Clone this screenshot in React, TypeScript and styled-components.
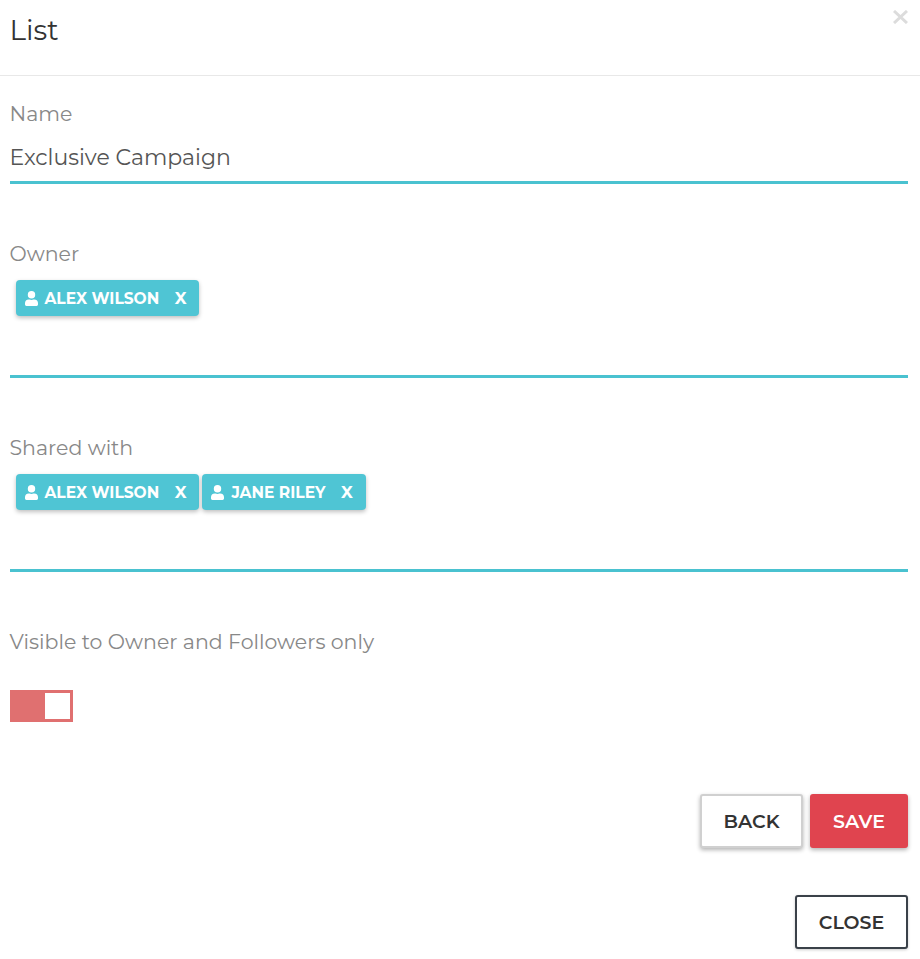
import React from "react";
import styled, { createGlobalStyle } from "styled-components";

const GlobalStyle = createGlobalStyle`
  html, body {
    margin: 0;
    padding: 0;
    background: #fff;
  }
  * {
    box-sizing: border-box;
  }
`;

const Page = styled.div`
  width: 920px;
  height: 959px;
  overflow: hidden;
  font-family: "Montserrat", "Inter", "Noto Sans", sans-serif;
  background: #fff;
  position: relative;
`;

const Header = styled.div`
  height: 76px;
  padding: 14px 10px 0 9.5px;
  border-bottom: 1px solid #e8e8e8;
`;

const Title = styled.h4`
  margin: 0;
  font-size: 28px;
  line-height: 32px;
  font-weight: 400;
  color: #333;
`;

const CloseIcon = styled.svg`
  position: absolute;
  top: 10px;
  right: 12px;
  width: 15px;
  height: 14px;
  stroke: #dcdcdc;
  stroke-width: 3;
`;

const Body = styled.div`
  padding: 0 12px 0 9.5px;
`;

const Label = styled.div`
  font-size: 20.5px;
  line-height: 25px;
  color: #888;
`;

const NameField = styled.div`
  margin-top: 25px;
`;

const NameValue = styled.div`
  margin-top: 12px;
  height: 46px;
  font-size: 22px;
  line-height: 40px;
  color: #555;
  border-bottom: 3px solid #4ac2d0;
`;

const TagField = styled.div`
  margin-top: 57px;
`;

const TagBox = styled.div`
  display: flex;
  gap: 3px;
  height: 109px;
  margin-top: 3px;
  padding: 11px 6px 0;
  border-bottom: 3px solid #4ac2d0;
  align-items: flex-start;
`;

const Tag = styled.div`
  display: flex;
  align-items: center;
  height: 36px;
  padding: 0 13px 0 9px;
  background: #4fc5d4;
  border-radius: 4px;
  box-shadow: 0 2px 4px rgba(0, 0, 0, 0.25);
  color: #fff;
  font-size: 15.5px;
  font-weight: 700;
`;

const TagIcon = styled.svg`
  width: 13px;
  height: 15px;
  margin-right: 7px;
  fill: #fff;
`;

const TagRemove = styled.span`
  margin-left: 15.5px;
  font-size: 16.5px;
`;

const VisibleField = styled.div`
  margin-top: 57px;
`;

const Toggle = styled.div`
  display: flex;
  justify-content: flex-end;
  width: 63px;
  height: 32px;
  margin-top: 36px;
  background: #e07070;
  border: 3px solid #e07070;
`;

const Knob = styled.div`
  width: 25px;
  background: #fff;
`;

const Actions = styled.div`
  display: flex;
  justify-content: flex-end;
  gap: 7px;
  margin-top: 72px;
`;

const Button = styled.button<{ $variant: "save" | "back" | "close" }>`
  height: 54px;
  width: ${(p) => (p.$variant === "save" ? "98px" : p.$variant === "back" ? "103px" : "113px")};
  font-family: inherit;
  font-size: 19px;
  font-weight: 600;
  border-radius: 3px;
  color: ${(p) => (p.$variant === "save" ? "#fff" : "#333")};
  background: ${(p) => (p.$variant === "save" ? "#e0444f" : "#fff")};
  border: ${(p) =>
    p.$variant === "save"
      ? "none"
      : p.$variant === "back"
        ? "2px solid #d0d0d0"
        : "2px solid #3a4149"};
  box-shadow: ${(p) =>
    p.$variant === "close" ? "0 1px 3px rgba(0, 0, 0, 0.2)" : "0 2px 4px rgba(0, 0, 0, 0.3)"};
`;

const Footer = styled.div`
  display: flex;
  justify-content: flex-end;
  margin-top: 47px;
`;

const UserTag: React.FC<{ name: string }> = ({ name }) => (
  <Tag>
    <TagIcon viewBox="0 0 448 512">
      <path d="M224 256a128 128 0 1 0 0-256 128 128 0 0 0 0 256zm90 32h-17a174 174 0 0 1-146 0h-17A134 134 0 0 0 0 422v42a48 48 0 0 0 48 48h352a48 48 0 0 0 48-48v-42a134 134 0 0 0-134-134z" />
    </TagIcon>
    {name}
    <TagRemove>X</TagRemove>
  </Tag>
);

function App() {
  return (
    <Page>
      <GlobalStyle />
      <Header>
        <Title>List</Title>
      </Header>
      <CloseIcon viewBox="0 0 15 14">
        <path d="M1 1l13 12M14 1L1 13" />
      </CloseIcon>
      <Body>
        <NameField>
          <Label>Name</Label>
          <NameValue>Exclusive Campaign</NameValue>
        </NameField>
        <TagField>
          <Label>Owner</Label>
          <TagBox>
            <UserTag name="ALEX WILSON" />
          </TagBox>
        </TagField>
        <TagField>
          <Label>Shared with</Label>
          <TagBox>
            <UserTag name="ALEX WILSON" />
            <UserTag name="JANE RILEY" />
          </TagBox>
        </TagField>
        <VisibleField>
          <Label>Visible to Owner and Followers only</Label>
          <Toggle>
            <Knob />
          </Toggle>
        </VisibleField>
        <Actions>
          <Button $variant="back">BACK</Button>
          <Button $variant="save">SAVE</Button>
        </Actions>
        <Footer>
          <Button $variant="close">CLOSE</Button>
        </Footer>
      </Body>
    </Page>
  );
}

export default App;
